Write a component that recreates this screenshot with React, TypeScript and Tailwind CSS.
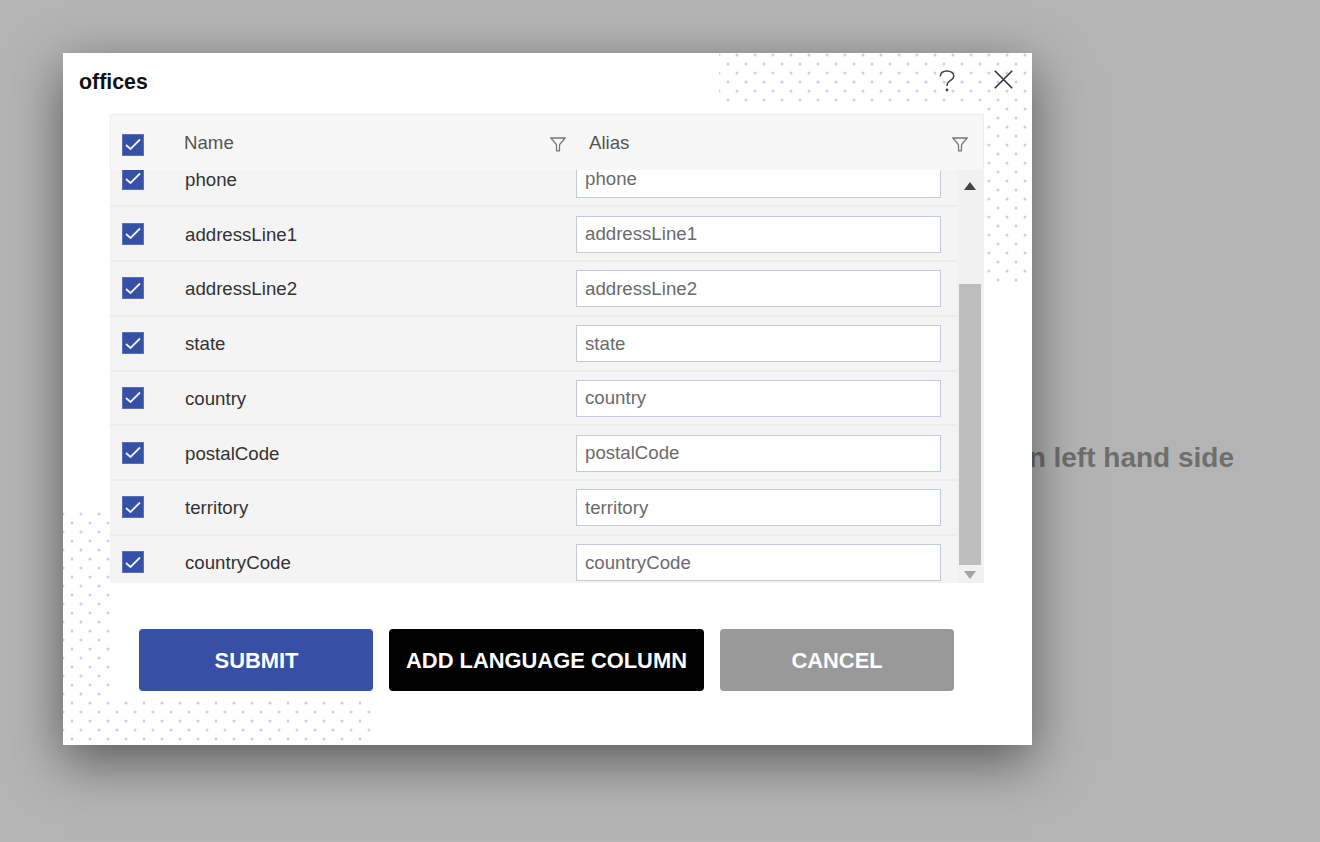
import React from 'react'

const fields = [
  'phone',
  'addressLine1',
  'addressLine2',
  'state',
  'country',
  'postalCode',
  'territory',
  'countryCode',
]

function CheckBox() {
  return (
    <span className="flex h-[22px] w-[22px] items-center justify-center border border-[#5a70b8] bg-[#3650a5]">
      <svg width="16" height="13" viewBox="0 0 16 13" fill="none" stroke="#eef1ff" strokeWidth="1.8">
        <path d="M1 7 L5.5 11 L15 1.5" />
      </svg>
    </span>
  )
}

function FilterIcon() {
  return (
    <svg width="16" height="15" viewBox="0 0 16 15" fill="none" stroke="#777777" strokeWidth="1.3">
      <path d="M0.8 1 H15.2 L9.6 7.6 L9.4 13.8 H6.6 L6.4 7.6 Z" />
    </svg>
  )
}

function Dots({ id, className, width, height, d }: { id: string; className: string; width: number; height: number; d: string }) {
  return (
    <svg className={className} width={width} height={height}>
      <defs>
        <pattern id={id} width="18" height="18" patternUnits="userSpaceOnUse">
          <circle cx="0" cy="2" r="1.5" fill="#c8d0f0" />
          <circle cx="18" cy="2" r="1.5" fill="#c8d0f0" />
          <circle cx="9" cy="11" r="1.5" fill="#c8d0f0" />
        </pattern>
      </defs>
      <path d={d} fill={`url(#${id})`} />
    </svg>
  )
}

export default function App() {
  return (
    <div className="relative h-[842px] w-[1320px] overflow-hidden bg-[#b4b4b4] font-['Liberation_Sans',Arial,sans-serif]">
      <div className="flex justify-end pr-[86px] pt-[442px] text-[28px] font-bold leading-[32px] text-[#6e6e6e]">
        Please select a table from the list on left hand side
      </div>

      {/* dialog */}
      <div className="absolute left-[63px] top-[53px] h-[692px] w-[969px] bg-white shadow-[0_16px_50px_rgba(0,0,0,0.5)]">
        <Dots
          id="dots-top"
          className="absolute left-[656px] top-0"
          width={309}
          height={232}
          d="M0 0 H309 V232 H264 V49 H0 Z"
        />
        <Dots
          id="dots-bottom"
          className="absolute bottom-0 left-0"
          width={309}
          height={233}
          d="M0 0 H47 V188 H309 V233 H0 Z"
        />

        <div className="relative">
          <div className="flex h-[61px] items-start justify-between pl-4 pr-[19px] pt-[15px]">
            <h1 className="text-[21.33px] font-bold leading-[28px] text-[#111111]">offices</h1>
            <div className="flex items-start gap-[39px] pt-[2px]">
              <svg width="16" height="22" viewBox="0 0 16 22" fill="none" stroke="#444444" strokeWidth="1.5">
                <path d="M1.2 6.5 C1.5 3 4 1 8 1 C12 1 14.8 3 14.8 6 C14.8 9 12 10 10 11.5 C8.5 12.6 8 14 8 16" />
                <circle cx="8" cy="20" r="1.4" fill="#444444" stroke="none" />
              </svg>
              <svg width="19" height="19" viewBox="0 0 19 19" fill="none" stroke="#333333" strokeWidth="1.6">
                <path d="M0.8 0.8 L18.2 18.2 M18.2 0.8 L0.8 18.2" />
              </svg>
            </div>
          </div>

          <div className="ml-[47px] w-[874px]">
            <div className="grid h-[56px] grid-cols-[73px_366px_39px_363px_31px] items-center border-x border-t border-[#eeeeee] bg-[#f7f7f7] text-[18.67px] text-[#555555]">
              <span className="pl-[11px] pt-[4px]">
                <CheckBox />
              </span>
              <span className="leading-[24px]">Name</span>
              <span className="pt-[4px]">
                <FilterIcon />
              </span>
              <span className="leading-[24px]">Alias</span>
              <span className="pt-[4px]">
                <FilterIcon />
              </span>
            </div>

            <div className="flex h-[413px] overflow-hidden">
              <div className="-mt-[17.5px] w-[847px] shrink-0">
                {fields.map((name) => (
                  <div
                    key={name}
                    className="grid h-[54.75px] grid-cols-[75px_391px_365px] items-center border-b-2 border-[#ececec] bg-[#f4f4f4] text-[18.67px]"
                  >
                    <span className="pl-3">
                      <CheckBox />
                    </span>
                    <span className="pt-[2px] leading-[24px] text-[#333333]">{name}</span>
                    <input
                      defaultValue={name}
                      className="mt-[1px] h-[37px] w-[365px] border border-[#c6cbdc] bg-white px-2 text-[18.67px] text-[#6b6b6b] outline-none"
                    />
                  </div>
                ))}
              </div>
              <div className="flex w-[27px] shrink-0 flex-col items-center bg-[#f1f1f1] pr-px">
                <svg className="mt-[12px] shrink-0" width="12" height="8" viewBox="0 0 12 8" fill="#444444">
                  <path d="M6 0 L12 8 H0 Z" />
                </svg>
                <div className="mt-[94px] h-[281px] w-[22px] shrink-0 bg-[#bdbdbd]" />
                <svg className="mt-[6px] shrink-0" width="12" height="8" viewBox="0 0 12 8" fill="#a3a3a3">
                  <path d="M0 0 H12 L6 8 Z" />
                </svg>
              </div>
            </div>
          </div>

          <div className="flex gap-4 pl-[76px] pt-[46px] text-[21.9px] font-bold text-white">
            <button className="h-[62px] w-[234px] rounded-[4px] bg-[#3650a5] pl-px pt-[2px]">SUBMIT</button>
            <button className="h-[62px] w-[315px] rounded-[4px] bg-black pt-[2px]">ADD LANGUAGE COLUMN</button>
            <button className="h-[62px] w-[234px] rounded-[4px] bg-[#999999] pt-[2px]">CANCEL</button>
          </div>
        </div>
      </div>
    </div>
  )
}
